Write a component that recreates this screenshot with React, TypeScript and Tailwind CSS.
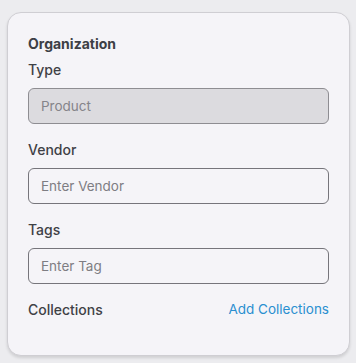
import React from "react";

const font = { fontFamily: "Inter, 'Open Sans', sans-serif" };

function Field({ label, placeholder, disabled }: { label: string; placeholder: string; disabled?: boolean }) {
  return (
    <div className="flex flex-col">
      <div className="h-[19px] flex items-center text-[14px] font-medium text-[#3f4146]">{label}</div>
      <div
        className={
          "mt-[9px] h-[36px] rounded-[6px] border flex items-center px-[12px] text-[13.5px] " +
          (disabled ? "bg-[#dcdbdf] border-[#8e8d92] text-[#85848a]" : "bg-[#f5f4f8] border-[#76757b] text-[#7e7d83]")
        }
      >
        {placeholder}
      </div>
    </div>
  );
}

export default function App() {
  return (
    <div className="w-[356px] h-[363px] bg-[#ececef] pt-[12px] pl-[7px]" style={font}>
      <div className="w-[343px] h-[344px] rounded-[14px] border border-[#cfced3] bg-[#f5f4f8] shadow-[0_2px_3px_rgba(0,0,0,0.12)] px-[20px] pt-[21px] flex flex-col">
        <div className="h-[18px] flex items-center text-[14px] font-bold text-[#3d3f45]">Organization</div>
        <div className="mt-[8px]">
          <Field label="Type" placeholder="Product" disabled />
        </div>
        <div className="mt-[16px]">
          <Field label="Vendor" placeholder="Enter Vendor" />
        </div>
        <div className="mt-[16px]">
          <Field label="Tags" placeholder="Enter Tag" />
        </div>
        <div className="mt-[16px] h-[19px] flex items-center justify-between text-[13.5px]">
          <span className="text-[14px] font-medium text-[#3f4146]">Collections</span>
          <span className="text-[#2a8fd0]">Add Collections</span>
        </div>
      </div>
    </div>
  );
}
